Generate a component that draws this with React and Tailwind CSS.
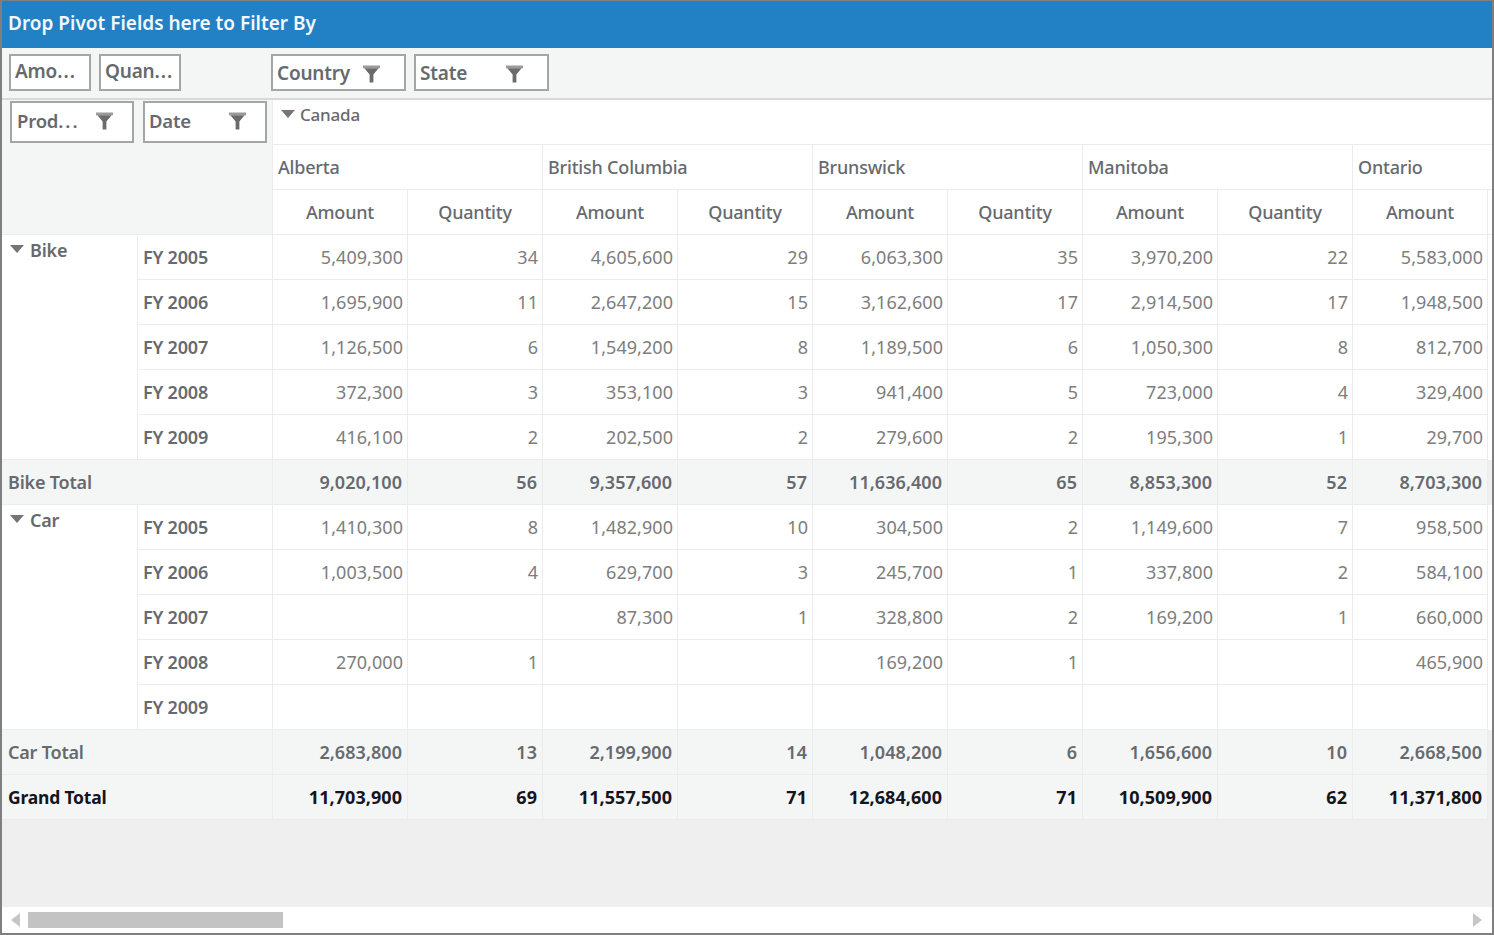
const cols = ["Alberta", "British Columbia", "Brunswick", "Manitoba"];

const bike = [
  ["FY 2005", "5,409,300", "34", "4,605,600", "29", "6,063,300", "35", "3,970,200", "22", "5,583,000"],
  ["FY 2006", "1,695,900", "11", "2,647,200", "15", "3,162,600", "17", "2,914,500", "17", "1,948,500"],
  ["FY 2007", "1,126,500", "6", "1,549,200", "8", "1,189,500", "6", "1,050,300", "8", "812,700"],
  ["FY 2008", "372,300", "3", "353,100", "3", "941,400", "5", "723,000", "4", "329,400"],
  ["FY 2009", "416,100", "2", "202,500", "2", "279,600", "2", "195,300", "1", "29,700"],
];
const car = [
  ["FY 2005", "1,410,300", "8", "1,482,900", "10", "304,500", "2", "1,149,600", "7", "958,500"],
  ["FY 2006", "1,003,500", "4", "629,700", "3", "245,700", "1", "337,800", "2", "584,100"],
  ["FY 2007", "", "", "87,300", "1", "328,800", "2", "169,200", "1", "660,000"],
  ["FY 2008", "270,000", "1", "", "", "169,200", "1", "", "", "465,900"],
  ["FY 2009", "", "", "", "", "", "", "", "", ""],
];
const bikeTotal = ["9,020,100", "56", "9,357,600", "57", "11,636,400", "65", "8,853,300", "52", "8,703,300"];
const carTotal = ["2,683,800", "13", "2,199,900", "14", "1,048,200", "6", "1,656,600", "10", "2,668,500"];
const grandTotal = ["11,703,900", "69", "11,557,500", "71", "12,684,600", "71", "10,509,900", "62", "11,371,800"];

function Funnel({ className }) {
  return (
    <svg viewBox="0 0 18 18" className={className}>
      <path d="M0 0H18V3H0Z" fill="#9a9a9a" />
      <path d="M1.5 3H16.5L11 9.5V18H7V9.5Z" fill="#6b6b6b" />
    </svg>
  );
}

function Caret() {
  return (
    <svg viewBox="0 0 14 8" className="w-[14px] h-[8px] shrink-0">
      <path d="M0 0H14L7 8Z" fill="#757575" />
    </svg>
  );
}

function Chip({ label, funnel, className, children }) {
  return (
    <div className={`flex items-center justify-between bg-white border-2 border-[#a4a6a6] pl-[4px] text-[#666a6e] font-semibold ${className}`}>
      <span className="whitespace-nowrap">{label}{children}</span>
      {funnel && <Funnel className="w-[17px] h-[18px] mr-[24px]" />}
    </div>
  );
}

const line = "border-r border-b border-[#ececec]";

function Val({ v, total, grand }) {
  const tone = grand
    ? "bg-[#f4f6f6] text-[#15151c] font-bold pr-[5px]"
    : total
      ? "bg-[#f4f6f6] text-[#666a6e] font-semibold pr-[5px]"
      : "bg-white text-[#7d7d7d] pr-[4px]";
  return <div className={`${line} ${tone} flex items-center justify-end tracking-[0.05px]`}>{v}</div>;
}

function Group({ name, rows, start }) {
  return (
    <>
      <div
        className={`${line} bg-white flex items-start gap-[6px] pl-[8px] text-[#666a6e] font-semibold col-start-1`}
        style={{ gridRow: `${start} / span 5` }}
      >
        <span className="mt-[10px]"><Caret /></span>
        <span className="mt-[2px]">{name}</span>
      </div>
      {rows.map((r, i) => (
        <Row key={i} r={r} />
      ))}
    </>
  );
}

function Row({ r }) {
  return (
    <>
      <div className={`${line} bg-white col-start-2 flex items-center pl-[5px] text-[#666a6e] font-semibold`}>{r[0]}</div>
      {r.slice(1).map((v, i) => (
        <Val key={i} v={v} />
      ))}
      <div className="bg-white" />
    </>
  );
}

function Total({ label, vals, grand }) {
  return (
    <>
      <div
        className={`${line} col-span-2 bg-[#f4f6f6] flex items-center pl-[6px] ${grand ? "text-[#15151c] font-bold text-[17.5px]" : "text-[#666a6e] font-semibold"}`}
      >
        {label}
      </div>
      {vals.map((v, i) => (
        <Val key={i} v={v} total={!grand} grand={grand} />
      ))}
      <div className="bg-[#efefef]" />
    </>
  );
}

export default function App() {
  return (
    <div className="w-[1494px] h-[935px] flex flex-col overflow-hidden bg-[#efefef] border-t border-x-2 border-b-2 border-[#7f7f7f] font-['Noto_Sans',sans-serif] text-[18px] tracking-[-0.2px]">
      <div className="h-[47px] shrink-0 bg-[#2280c4] flex items-center pl-[6px] pb-[2px] text-[#f4f8fb] font-semibold text-[19px] tracking-[0px]">
        Drop Pivot Fields here to Filter By
      </div>

      <div className="h-[52px] shrink-0 bg-[#f4f6f6] border-b-2 border-[#d8dada] flex items-start pt-[6px] pl-[7px] text-[19px]">
        <div className="w-[262px] flex gap-[8px]">
          <Chip className="w-[82px] h-[37px] pb-[2px]">Amo<span className="tracking-[1px]">...</span></Chip>
          <Chip className="w-[82px] h-[37px] pb-[2px]">Quan<span className="tracking-[1px]">...</span></Chip>
        </div>
        <div className="flex gap-[8px]">
          <Chip label="Country" funnel className="w-[135px] h-[37px] pt-[2px]" />
          <Chip label="State" funnel className="w-[135px] h-[37px] pt-[2px]" />
        </div>
      </div>

      <div className="grid grid-cols-[136px_135px_repeat(9,135px)_4px] auto-rows-[45px] bg-white">
        <div className="col-span-2 row-span-3 bg-[#f4f6f6] border-r border-b border-[#ececec] flex items-start gap-[9px] pl-[8px] pt-[1px] text-[18.5px]">
          <Chip className="w-[124px] h-[42px] pl-[5px] pb-[2px] [&>svg]:mr-[19px]" funnel>Prod<span className="tracking-[2px]">...</span></Chip>
          <Chip label="Date" funnel className="w-[124px] h-[42px] pb-[2px] [&>svg]:mr-[19px]" />
        </div>

        <div className="col-span-10 border-b border-[#ececec] bg-white flex items-start gap-[5px] pl-[8px] text-[17px] text-[#666a6e] font-medium">
          <span className="mt-[10px]"><Caret /></span>
          <span className="mt-[2px]">Canada</span>
        </div>

        {cols.map((c) => (
          <div key={c} className={`${line} col-span-2 bg-white flex items-center pl-[5px] text-[#666a6e] font-medium`}>
            {c}
          </div>
        ))}
        <div className="col-span-2 border-b border-[#ececec] bg-white flex items-center pl-[5px] text-[#666a6e] font-medium">
          Ontario
        </div>

        {["Amount", "Quantity", "Amount", "Quantity", "Amount", "Quantity", "Amount", "Quantity", "Amount"].map((h, i) => (
          <div key={i} className={`${line} bg-white flex items-center justify-center text-[#666a6e] font-medium`}>
            {h}
          </div>
        ))}
        <div className="bg-white border-b border-[#ececec]" />

        <Group name="Bike" rows={bike} start={4} />
        <Total label="Bike Total" vals={bikeTotal} />
        <Group name="Car" rows={car} start={10} />
        <Total label="Car Total" vals={carTotal} />
        <Total label="Grand Total" vals={grandTotal} grand />
      </div>

      <div className="mt-auto h-[26px] shrink-0 bg-white flex items-center pl-[9px] pr-[10px]">
        <svg viewBox="0 0 9 14" className="w-[9px] h-[14px]"><path d="M9 0V14L0 7Z" fill="#c6c6c6" /></svg>
        <div className="ml-[8px] w-[255px] h-[16px] bg-[#c3c3c3]" />
        <svg viewBox="0 0 9 14" className="w-[9px] h-[14px] ml-auto"><path d="M0 0V14L9 7Z" fill="#c6c6c6" /></svg>
      </div>
    </div>
  );
}
